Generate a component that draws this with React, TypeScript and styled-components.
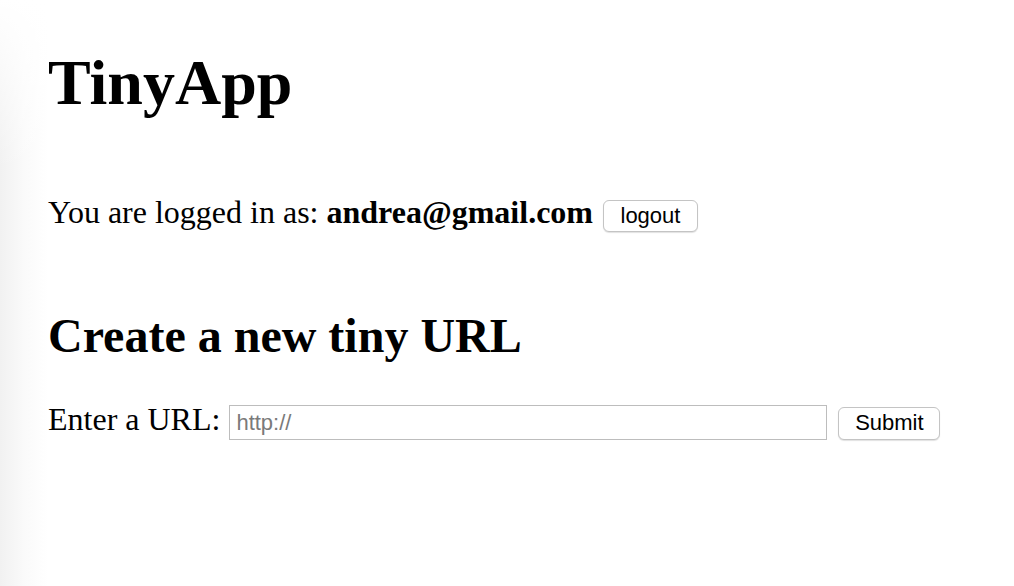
import React from 'react'
import styled, { createGlobalStyle } from 'styled-components'

const GlobalStyle = createGlobalStyle`
  html,
  body {
    margin: 0;
    height: 100%;
  }

  body {
    font-family: 'Liberation Serif', 'Times New Roman', serif;
    color: #000;
    background:
      linear-gradient(to bottom, #fff 0, rgba(255, 255, 255, 0) 170px),
      linear-gradient(to right, #f1f1f1 0, #fafafa 24px, #fff 48px);
  }
`

const Page = styled.main`
  box-sizing: border-box;
  height: 100vh;
  padding: 46px 0 0 48px;
  overflow: hidden;
`

const Title = styled.h1`
  margin: 0;
  font-size: 64px;
  line-height: 74px;
  font-weight: 700;
`

const Subtitle = styled.h2`
  margin: 76px 0 0;
  font-size: 48px;
  line-height: 56px;
  font-weight: 700;
`

const Row = styled.div<{ $top: number }>`
  display: flex;
  align-items: baseline;
  gap: 10px;
  margin-top: ${({ $top }) => $top}px;
  font-size: 32px;
  line-height: 40px;
`

const Label = styled.span`
  white-space: nowrap;
`

const Button = styled.button<{ $width: number; $height: number }>`
  width: ${({ $width }) => $width}px;
  height: ${({ $height }) => $height}px;
  padding: 0;
  font-family: 'Liberation Sans', Arial, sans-serif;
  font-size: 22px;
  color: #000;
  background: #fff;
  border: 1px solid #c4c4c4;
  border-radius: 6px;
  box-shadow: 0 1px 1px rgba(0, 0, 0, 0.12);
  cursor: pointer;
`

const UrlInput = styled.input`
  box-sizing: border-box;
  width: 598px;
  height: 35px;
  margin-left: -1px;
  margin-right: 1px;
  padding: 3px 6px 1px;
  font-family: 'Liberation Sans', Arial, sans-serif;
  font-size: 22px;
  border: 1px solid #bdbdbd;
  border-radius: 0;
  outline: none;

  &::placeholder {
    color: #7a7a7a;
  }
`

const App = () => (
  <>
    <GlobalStyle />
    <Page>
      <Title>TinyApp</Title>
      <Row $top={72}>
        <Label>
          You are logged in as: <b>andrea@gmail.com</b>
        </Label>
        <Button type="button" $width={95} $height={32}>
          logout
        </Button>
      </Row>
      <Subtitle>Create a new tiny URL</Subtitle>
      <Row as="form" $top={35} onSubmit={(e: React.FormEvent) => e.preventDefault()}>
        <Label>Enter a URL:</Label>
        <UrlInput type="text" name="longURL" placeholder="http://" />
        <Button type="submit" $width={102} $height={33}>
          Submit
        </Button>
      </Row>
    </Page>
  </>
)

export default App
